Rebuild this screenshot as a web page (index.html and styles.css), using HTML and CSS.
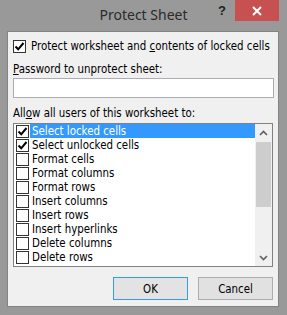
FILE: index.html
```html
<!DOCTYPE html>
<html lang="en">
<head>
  <meta charset="UTF-8" />
  <meta name="viewport" content="width=device-width, initial-scale=1.0"/>
  <title>Protect Sheet</title>
  <link rel="stylesheet" href="styles.css">
</head>
<body>
  <div class="window">
    <div class="titlebar">
      <div></div>
      <div class="title">Protect Sheet</div>
      <div class="caption-btns">
        <span class="help">?</span>
        <span class="close">
          <svg width="10" height="10" viewBox="0 0 10 10"><path d="M1 1 L9 9 M9 1 L1 9" stroke="#fff" stroke-width="2"/></svg>
        </span>
      </div>
    </div>

    <div class="client">
      <label class="check-row">
        <span class="box checked"><svg width="11" height="11" viewBox="0 0 11 11"><path d="M1.5 5.5 L4.2 8.3 L9.5 2" fill="none" stroke="#000" stroke-width="2"/></svg></span>
        <span>Protect worksheet and <u>c</u>ontents of locked cells</span>
      </label>

      <div class="field-label"><u>P</u>assword to unprotect sheet:</div>
      <input type="password" class="password">

      <div class="field-label list-label">All<u>o</u>w all users of this worksheet to:</div>

      <div class="listbox">
        <ul class="items">
          <li class="selected"><span class="box checked"><svg width="11" height="11" viewBox="0 0 11 11"><path d="M1.5 5.5 L4.2 8.3 L9.5 2" fill="none" stroke="#000" stroke-width="2"/></svg></span><span class="text">Select locked cells</span></li>
          <li><span class="box checked"><svg width="11" height="11" viewBox="0 0 11 11"><path d="M1.5 5.5 L4.2 8.3 L9.5 2" fill="none" stroke="#000" stroke-width="2"/></svg></span><span class="text">Select unlocked cells</span></li>
          <li><span class="box"></span><span class="text">Format cells</span></li>
          <li><span class="box"></span><span class="text">Format columns</span></li>
          <li><span class="box"></span><span class="text">Format rows</span></li>
          <li><span class="box"></span><span class="text">Insert columns</span></li>
          <li><span class="box"></span><span class="text">Insert rows</span></li>
          <li><span class="box"></span><span class="text">Insert hyperlinks</span></li>
          <li><span class="box"></span><span class="text">Delete columns</span></li>
          <li><span class="box"></span><span class="text">Delete rows</span></li>
        </ul>
        <div class="scrollbar">
          <span class="arrow"><svg width="9" height="6" viewBox="0 0 9 6"><path d="M1 5 L4.5 1.5 L8 5" fill="none" stroke="#606060" stroke-width="1.6"/></svg></span>
          <span class="track"><span class="thumb"></span></span>
          <span class="arrow"><svg width="9" height="6" viewBox="0 0 9 6"><path d="M1 1 L4.5 4.5 L8 1" fill="none" stroke="#606060" stroke-width="1.6"/></svg></span>
        </div>
      </div>

      <div class="buttons">
        <button class="default">OK</button>
        <button>Cancel</button>
      </div>
    </div>
  </div>
</body>
</html>
```

FILE: styles.css
```css
body { margin: 0; background: #999999; font-family: "DejaVu Sans Condensed", "DejaVu Sans", sans-serif; font-size: 11.4px; color: #000; }
.window { width: 287px; height: 315px; display: flex; flex-direction: column; }

.titlebar { height: 31px; display: grid; grid-template-columns: 1fr auto 1fr; }
.title { font-family: "Noto Sans", sans-serif; font-size: 14px; color: #2b2b2b; padding-top: 5px; }
.caption-btns { display: flex; justify-content: flex-end; align-items: flex-start; margin-right: 8px; }
.help { width: 26px; height: 21px; display: flex; align-items: center; justify-content: center; font-family: "Liberation Sans", sans-serif; font-weight: bold; font-size: 13px; color: #222; }
.close { width: 44px; height: 21px; background: #c75050; display: flex; align-items: center; justify-content: center; }

.client { margin: 0 8px 0 7px; height: 276px; box-sizing: border-box; background: #f0f0f0; border: 1px solid #838383; padding: 7px 4px 0 5px; display: flex; flex-direction: column; white-space: nowrap; }

.check-row { display: flex; align-items: center; height: 14px; gap: 5px; }
.box { width: 13px; height: 13px; box-sizing: border-box; border: 1px solid #333; background: #fff; display: flex; align-items: center; justify-content: center; flex: none; }

.field-label { height: 14px; line-height: 14px; margin-top: 9px; }
.password { height: 20px; box-sizing: border-box; border: 1px solid #abadb3; background: #fff; margin: 2px 0 0 0; padding: 0; }
.list-label { margin-top: 8px; }

.listbox { margin-top: 3px; margin-right: 1px; height: 144px; box-sizing: border-box; border: 1px solid #828282; background: #fff; display: flex; }
.items { list-style: none; margin: 0; padding: 0 0 0 2px; flex: 1; }
.items li { height: 14px; display: flex; align-items: center; }
.items .text { flex: 1; height: 14px; line-height: 14px; margin-left: 1px; padding-left: 2px; }
.items .selected .text { background: #3399ff; color: #fff; }

.scrollbar { width: 17px; background: #f0f0f0; display: flex; flex-direction: column; }
.arrow { height: 17px; display: flex; align-items: center; justify-content: center; }
.track { flex: 1; }
.thumb { display: block; margin: 1px 1px 0 1px; height: 65px; background: #cdcdcd; }

.buttons { display: flex; justify-content: flex-end; gap: 10px; margin-top: 10px; margin-right: 1px; }
button { width: 75px; height: 23px; box-sizing: border-box; font-family: "DejaVu Sans Condensed", "DejaVu Sans", sans-serif; font-size: 11.4px; color: #000; background: #e1e1e1; border: 1px solid #adadad; padding: 0; }
button.default { border-color: #3399ff; background: #e3e3e3; }
```
